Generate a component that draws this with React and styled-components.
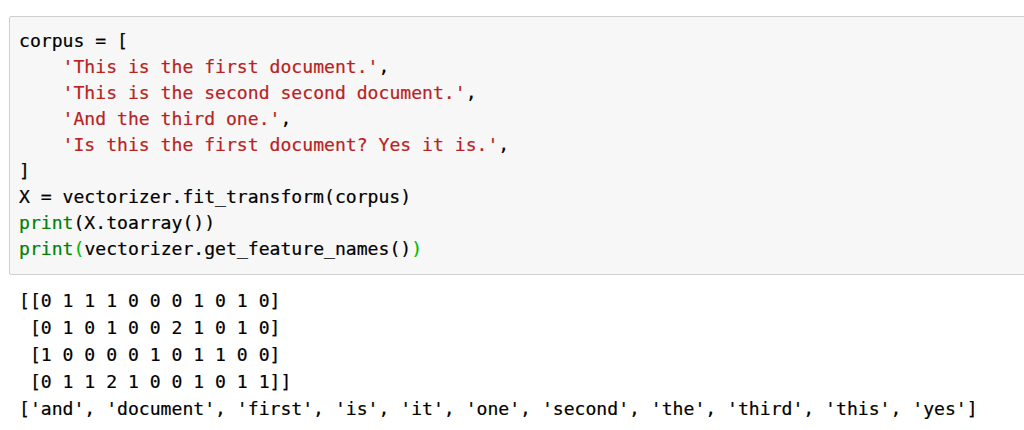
import React from "react";
import styled, { createGlobalStyle } from "styled-components";

const Global = createGlobalStyle`
  html, body { margin: 0; padding: 0; background: #fff; overflow: hidden; }
  body { font-family: "DejaVu Sans Mono", "Liberation Mono", monospace; }
`;

const Page = styled.div`
  width: 1024px;
  height: 430px;
  padding: 16px 0 0 9px;
  box-sizing: border-box;
  display: flex;
  flex-direction: column;
  overflow: hidden;
`;

const CodeCell = styled.div`
  width: 1060px;
  background: #f7f7f7;
  border: 1px solid #cfcfcf;
  border-radius: 2px;
  padding: 11px 0 12px 9px;
  box-sizing: border-box;
  display: flex;
  flex-direction: column;
`;

const Output = styled.div`
  padding: 12px 0 0 10px;
  display: flex;
  flex-direction: column;
`;

const Line = styled.div`
  font-family: "DejaVu Sans Mono", "Liberation Mono", monospace;
  font-size: 18.1px;
  line-height: ${(p) => p.$lh}px;
  height: ${(p) => p.$lh}px;
  color: #000;
  white-space: pre;
  -webkit-text-stroke: 0.2px currentColor;
`;

const Str = styled.span`
  color: #ba2121;
`;
const Builtin = styled.span`
  color: #008000;
`;
const Match = styled.span`
  color: #00bb00;
`;

const outputLines = [
  "[[0 1 1 1 0 0 0 1 0 1 0]",
  " [0 1 0 1 0 0 2 1 0 1 0]",
  " [1 0 0 0 0 1 0 1 1 0 0]",
  " [0 1 1 2 1 0 0 1 0 1 1]]",
  "['and', 'document', 'first', 'is', 'it', 'one', 'second', 'the', 'third', 'this', 'yes']",
];

const strings = [
  "'This is the first document.'",
  "'This is the second second document.'",
  "'And the third one.'",
  "'Is this the first document? Yes it is.'",
];

export default function App() {
  return (
    <>
      <Global />
      <Page>
        <CodeCell>
          <Line $lh={26}>corpus = [</Line>
          {strings.map((s) => (
            <Line $lh={26} key={s}>
              {"    "}
              <Str>{s}</Str>,
            </Line>
          ))}
          <Line $lh={26}>]</Line>
          <Line $lh={26}>X = vectorizer.fit_transform(corpus)</Line>
          <Line $lh={26}>
            <Builtin>print</Builtin>(X.toarray())
          </Line>
          <Line $lh={26}>
            <Builtin>print</Builtin>
            <Match>(</Match>vectorizer.get_feature_names()<Match>)</Match>
          </Line>
        </CodeCell>
        <Output>
          {outputLines.map((l) => (
            <Line $lh={27} key={l}>
              {l}
            </Line>
          ))}
        </Output>
      </Page>
    </>
  );
}
